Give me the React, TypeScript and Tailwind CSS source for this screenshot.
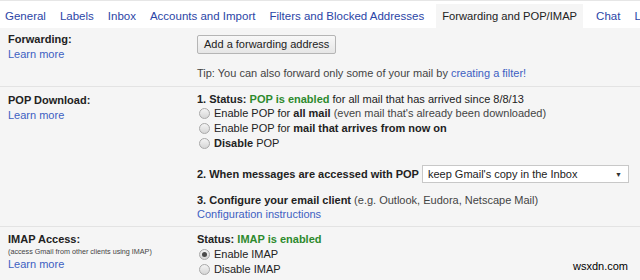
import React from 'react';

const tabs = [
  'General',
  'Labels',
  'Inbox',
  'Accounts and Import',
  'Filters and Blocked Addresses',
  'Forwarding and POP/IMAP',
  'Chat',
  'Labs',
];

const Radio = ({ checked = false }: { checked?: boolean }) => (
  <span className="inline-flex items-center justify-center w-[11px] h-[11px] rounded-full border border-[#a9a9a9] bg-gradient-to-b from-[#f4f4f4] to-[#d6d6d6] mr-[4px] shrink-0">
    {checked && <span className="w-[5px] h-[5px] rounded-full bg-[#4a4a4a]" />}
  </span>
);

const Option = ({ checked, children }: { checked?: boolean; children: React.ReactNode }) => (
  <div className="flex items-center h-[15px] pl-[2px] whitespace-nowrap">
    <Radio checked={checked} />
    <span>{children}</span>
  </div>
);

const Link = ({ children }: { children: React.ReactNode }) => (
  <span className="text-[#3d5fc2] cursor-pointer">{children}</span>
);

export default function App() {
  return (
    <div className="relative w-[640px] h-[280px] overflow-hidden bg-[#f5f5f5] text-[11px] leading-[15px] text-[#222] font-['Liberation_Sans',Arial,sans-serif]">
      {/* tab strip */}
      <div className="h-[28px] bg-white border-t border-[#e6e6e6] flex items-end -ml-[2px] whitespace-nowrap">
        {tabs.map(t => (
          <div
            key={t}
            className={
              t === 'Forwarding and POP/IMAP'
                ? 'h-[24px] px-[6px] ml-[5px] mr-[6px] flex items-center bg-[#f5f5f5] text-[#222] text-[11.2px]'
                : 'h-[24px] px-[7px] flex items-center text-[#2b45a6] text-[11.5px]'
            }
          >
            {t}
          </div>
        ))}
      </div>

      {/* Forwarding */}
      <div className="flex border-b border-[#e3e3e3] pt-[4px] pb-[5px]">
        <div className="w-[197px] pl-[8px] shrink-0">
          <div className="font-bold">Forwarding:</div>
          <Link>Learn more</Link>
        </div>
        <div>
          <button className="mt-[3px] h-[19px] px-[6px] border border-[#b5b5b5] rounded-[2px] bg-gradient-to-b from-[#f8f8f8] to-[#e6e6e6] text-[11px] text-[#222] leading-[15px]">
            Add a forwarding address
          </button>
          <div className="mt-[12px] text-[#444]">
            Tip: You can also forward only some of your mail by <Link>creating a filter!</Link>
          </div>
        </div>
      </div>

      {/* POP */}
      <div className="flex border-b border-[#e3e3e3] pt-[6px] pb-[5px]">
        <div className="w-[197px] pl-[8px] shrink-0">
          <div className="font-bold">POP Download:</div>
          <Link>Learn more</Link>
        </div>
        <div>
          <div className="leading-[13px] whitespace-nowrap">
            <b>1. Status:</b> <b className="text-[#2d8a2d]">POP is enabled</b> for all mail that has arrived since 8/8/13
          </div>
          <Option>
            Enable POP for <b>all mail</b> <span className="text-[#444]">(even mail that's already been downloaded)</span>
          </Option>
          <Option>
            Enable POP for <b>mail that arrives from now on</b>
          </Option>
          <Option>
            <b>Disable</b> POP
          </Option>
          <div className="flex items-center mt-[14px] h-[18px]">
            <b>2. When messages are accessed with POP</b>
            <div className="ml-[3px] w-[207px] h-[18px] bg-white border border-[#c8c8c8] flex items-center justify-between pl-[5px] pr-[6px]">
              <span>keep Gmail's copy in the Inbox</span>
              <span className="text-[7px] leading-none text-[#333]">▼</span>
            </div>
          </div>
          <div className="mt-[10px] leading-[14px]">
            <b>3. Configure your email client</b> <span className="text-[#444]">(e.g. Outlook, Eudora, Netscape Mail)</span>
          </div>
          <div className="leading-[14px]">
            <Link>Configuration instructions</Link>
          </div>
        </div>
      </div>

      {/* IMAP */}
      <div className="flex pt-[5px]">
        <div className="w-[197px] pl-[8px] shrink-0">
          <div className="font-bold">IMAP Access:</div>
          <div className="text-[7.2px] leading-[10px] text-[#444] whitespace-nowrap">(access Gmail from other clients using IMAP)</div>
          <Link>Learn more</Link>
        </div>
        <div>
          <div>
            <b>Status:</b> <b className="text-[#2d8a2d]">IMAP is enabled</b>
          </div>
          <Option checked>Enable IMAP</Option>
          <Option>Disable IMAP</Option>
        </div>
      </div>

      <div className="absolute right-[12px] bottom-[6px] text-[11px] text-black">wsxdn.com</div>
    </div>
  );
}
